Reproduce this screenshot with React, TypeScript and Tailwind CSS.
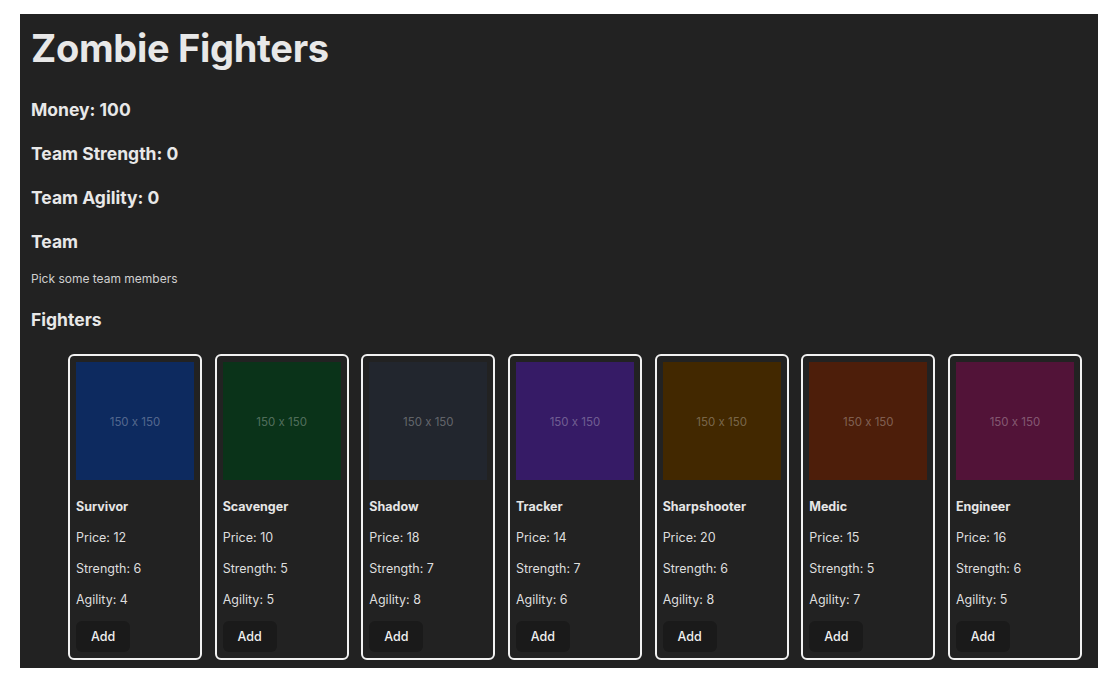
import React from 'react';

interface Fighter {
  name: string;
  price: number;
  strength: number;
  agility: number;
  swatch: string;
}

const fighters: Fighter[] = [
  { name: 'Survivor', price: 12, strength: 6, agility: 4, swatch: 'bg-[#0d2a5f]' },
  { name: 'Scavenger', price: 10, strength: 5, agility: 5, swatch: 'bg-[#0a3319]' },
  { name: 'Shadow', price: 18, strength: 7, agility: 8, swatch: 'bg-[#22262e]' },
  { name: 'Tracker', price: 14, strength: 7, agility: 6, swatch: 'bg-[#361b66]' },
  { name: 'Sharpshooter', price: 20, strength: 6, agility: 8, swatch: 'bg-[#422800]' },
  { name: 'Medic', price: 15, strength: 5, agility: 7, swatch: 'bg-[#4d1e0a]' },
  { name: 'Engineer', price: 16, strength: 6, agility: 5, swatch: 'bg-[#521338]' },
];

function FighterCard({ fighter }: { fighter: Fighter }) {
  return (
    <li className="w-[134px] shrink-0 rounded-[6px] border-2 border-[#f2f2f2] p-[6px] flex flex-col">
      {/* Placeholder image */}
      <div
        className={`w-[118px] h-[118px] pt-[4px] flex items-center justify-center text-[11.5px] text-white/30 ${fighter.swatch}`}
      >
        150 x 150
      </div>
      <div className="mt-[12px] h-[31px] flex items-center text-[12.5px] font-bold text-[#e6e6e6]">
        {fighter.name}
      </div>
      <div className="h-[31px] flex items-center text-[12.5px] text-[#dedede]">Price: {fighter.price}</div>
      <div className="h-[31px] flex items-center text-[12.5px] text-[#dedede]">Strength: {fighter.strength}</div>
      <div className="h-[31px] flex items-center text-[12.5px] text-[#dedede]">Agility: {fighter.agility}</div>
      <button className="mt-[5px] w-[54px] h-[31px] pt-[2px] rounded-[6px] bg-[#1a1a1a] text-[12.5px] font-medium text-[#f0f0f0]">
        Add
      </button>
    </li>
  );
}

export default function App() {
  return (
    <div
      className="w-full h-[683px] bg-white pt-[14px] pl-[20px] pr-[17px] overflow-hidden [font-feature-settings:'calt'_0]"
      style={{ fontFamily: 'Inter, "Noto Sans", sans-serif' }}
    >
      <div className="h-[654px] bg-[#222222] px-[11px] overflow-hidden text-[#e8e8e8]">
        <div className="h-[74px] pb-[6px] flex items-center">
          <h1 className="text-[38px] font-bold leading-none tracking-[-0.3px]">Zombie Fighters</h1>
        </div>
        <h3 className="h-[44px] flex items-center text-[17.5px] font-bold">Money: 100</h3>
        <h3 className="h-[44px] flex items-center text-[17.5px] font-bold">Team Strength: 0</h3>
        <h3 className="h-[44px] flex items-center text-[17.5px] font-bold">Team Agility: 0</h3>
        <h2 className="h-[44px] flex items-center text-[17.5px] font-bold">Team</h2>
        <p className="h-[30px] flex items-center text-[12px] text-[#d0d0d0]">Pick some team members</p>
        <h2 className="h-[52px] flex items-center text-[17.5px] font-bold">Fighters</h2>

        <ul className="mt-[8px] pl-[37px] flex gap-[12.67px]">
          {fighters.map((f) => (
            <FighterCard key={f.name} fighter={f} />
          ))}
        </ul>
      </div>
    </div>
  );
}
